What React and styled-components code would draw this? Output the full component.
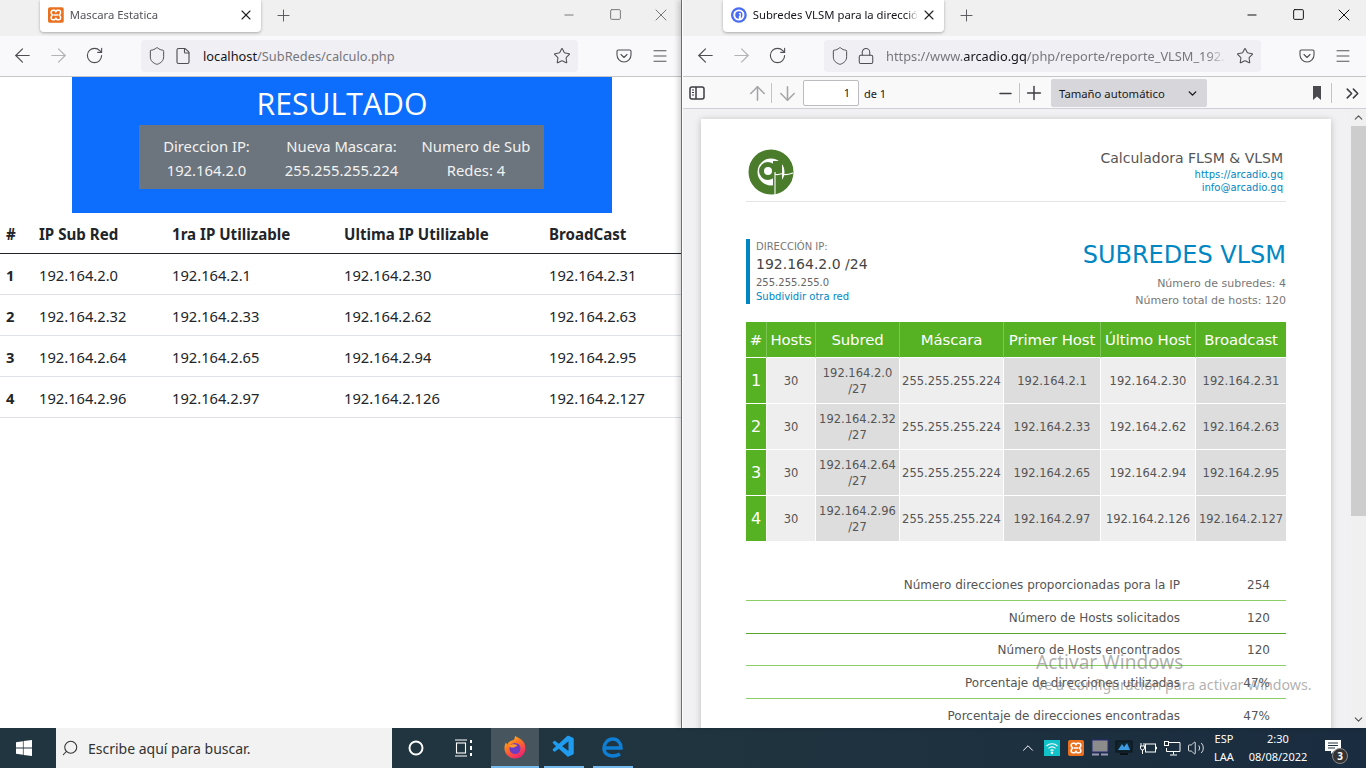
import React from 'react';
import styled, { createGlobalStyle } from 'styled-components';
import {
  ArrowLeft, ArrowRight, RotateCw, Shield, File, Lock, Star, Menu, X, Plus, Minus, Square,
  ArrowUp, ArrowDown, ChevronDown, ChevronsRight, ChevronUp, Search, Volume2,
} from 'lucide-react';
import { VscVscode } from 'react-icons/vsc';

const GlobalStyle = createGlobalStyle`
  html, body { margin: 0; padding: 0; background: #fff; overflow: hidden; }
  * { box-sizing: border-box; }
`;

const UI_FONT = `"Noto Sans", "Open Sans", sans-serif`;
const PDF_FONT = `"DejaVu Sans", Verdana, sans-serif`;

const Desktop = styled.div`
  position: relative;
  width: 1366px;
  height: 768px;
  overflow: hidden;
  display: flex;
  flex-direction: column;
  font-family: ${UI_FONT};
`;

const Windows = styled.div`
  display: flex;
  height: 728px;
`;

const LeftPane = styled.div`
  width: 681px;
  overflow: hidden;
`;

const RightPane = styled.div`
  width: 685px;
  padding-left: 1px;
  border-left: 1px solid #6b6b6b;
  background: #fff;
  box-shadow: -3px 0 5px rgba(0, 0, 0, 0.16);
  position: relative;
  overflow: hidden;
`;

const Browser = styled.div`
  width: 683px;
  height: 728px;
  display: flex;
  flex-direction: column;
  background: #fff;
`;

const TabStrip = styled.div`
  height: 36px;
  flex: none;
  background: #f0f0f0;
  display: flex;
  padding-left: 40px;
`;

const Tab = styled.div`
  width: 221px;
  height: 32px;
  background: #fff;
  border-radius: 0 0 4px 4px;
  box-shadow: 0 1px 3px rgba(0, 0, 0, 0.3);
  display: flex;
  align-items: center;
  padding: 0 8px 3px;
  color: ${p => (p.$active ? '#15141a' : '#55545a')};
  font-size: 11.3px;
  gap: 6px;
`;

const TabTitle = styled.span`
  width: 168px;
  white-space: nowrap;
  overflow: hidden;
  mask-image: linear-gradient(to right, #000 93%, transparent);
`;

const TabClose = styled(X)`
  flex: none;
  margin: 0 -1px 0 -3px;
  color: #222;
`;

const NewTab = styled.div`
  width: 24px;
  height: 30px;
  margin-left: 10px;
  display: flex;
  align-items: center;
  justify-content: center;
  color: #55545a;
`;

const WindowControls = styled.div`
  display: flex;
  margin-left: auto;
  margin-right: -1px;
  color: ${p => (p.$active ? '#111' : '#777')};
`;

const WindowControl = styled.div`
  width: 46px;
  height: 29px;
  display: flex;
  align-items: center;
  justify-content: center;
`;

const Toolbar = styled.div`
  height: 41px;
  flex: none;
  background: #f9f9fb;
  border-bottom: 1px solid #c6c6c8;
  display: flex;
  align-items: center;
  padding: 0 0 1px 4px;
  color: #4f4e54;
`;

const ToolButton = styled.div`
  width: 36px;
  height: 32px;
  flex: none;
  display: flex;
  align-items: center;
  justify-content: center;
  color: ${p => (p.$disabled ? '#b3b2b6' : '#4f4e54')};
`;

const UrlBar = styled.div`
  width: 437px;
  height: 32px;
  flex: none;
  margin: 0 28px 0 29px;
  background: #f0f0f4;
  border-radius: 4px;
  display: flex;
  align-items: center;
  padding: 0 8px;
  gap: 10px;
`;

const UrlIcon = styled.div`
  width: 16px;
  height: 20px;
  flex: none;
  display: flex;
  align-items: center;
  justify-content: center;
  svg { flex: none; }
`;

const UrlText = styled.div`
  flex: 1;
  min-width: 0;
  margin: 1px 0 0 2px;
  font-size: 12.8px;
  color: #77767c;
  white-space: nowrap;
  overflow: hidden;
  mask-image: ${p => (p.$fade ? 'linear-gradient(to right, #000 94%, transparent)' : 'none')};
  strong { font-weight: 400; color: #15141a; }
`;

const ResultPage = styled.div`
  flex: 1;
  background: #fff;
`;

const Hero = styled.section`
  width: 540px;
  height: 136px;
  margin-left: 72px;
  background: #0d6efd;
  color: #fff;
  padding-top: 8px;
`;

const HeroTitle = styled.h1`
  margin: 0 0 3px;
  font-weight: 400;
  font-family: "Open Sans", sans-serif;
  font-size: 30.2px;
  line-height: 37px;
  text-align: center;
`;

const InfoPanel = styled.div`
  width: 405px;
  height: 64px;
  margin: 0 0 0 67px;
  padding: 9px 0 7px 0;
  background: #6c757d;
  color: #f2f2f2;
  display: grid;
  grid-template-columns: 135px 135px 134px;
  font-size: 14.8px;
  line-height: 24px;
  text-align: center;
  font-weight: 400;
  white-space: nowrap;
`;

const ResultTable = styled.table`
  width: 681px;
  margin-top: 1px;
  table-layout: fixed;
  border-collapse: collapse;
  color: #212529;
  font-size: 14.7px;
  th, td { padding: 2px 0 0 6px; text-align: left; white-space: nowrap; }
  th { height: 39px; font-weight: 700; font-size: 15.1px; border-bottom: 1px solid #212529; }
  td { height: 41px; border-bottom: 1px solid #dee2e6; }
  td:first-child { font-weight: 700; }
`;

const PdfToolbar = styled.div`
  height: 32px;
  flex: none;
  background: #f9f9fa;
  border-bottom: 1px solid #cfcfd8;
  display: flex;
  align-items: center;
  padding-top: 1px;
  color: #4a4a4f;
`;

const PdfButton = styled.div`
  width: 28px;
  height: 28px;
  flex: none;
  margin-left: ${p => p.$gap || 0}px;
  display: flex;
  align-items: center;
  justify-content: center;
  color: ${p => (p.$disabled ? '#a5a5a8' : '#3d3d42')};
`;

const PdfDivider = styled.div`
  width: 1px;
  height: 20px;
  flex: none;
  background: #c4c4c8;
`;

const PageInput = styled.div`
  width: 56px;
  height: 26px;
  margin: 0 5px 0 2px;
  flex: none;
  border: 1px solid #bbbbc0;
  border-radius: 2px;
  background: #fff;
  font-size: 11px;
  color: #18181a;
  line-height: 24px;
  text-align: right;
  padding-right: 8px;
`;

const PageCount = styled.div`
  width: 22px;
  font-size: 11px;
  white-space: nowrap;
  color: #18181a;
`;

const ZoomSelect = styled.div`
  width: 156px;
  height: 28px;
  margin: 0 96px 0 3px;
  flex: none;
  background: #d7d7db;
  border-radius: 2px;
  display: flex;
  align-items: center;
  justify-content: space-between;
  padding: 0 8px;
  font-size: 11.3px;
  color: #18181a;
`;

const PdfBody = styled.div`
  flex: 1;
  min-height: 0;
  display: flex;
  background: #f1f1f3;
`;

const Viewer = styled.div`
  flex: 1;
  min-width: 0;
  padding: 10px 0 0 18px;
  overflow: hidden;
`;

const Scrollbar = styled.div`
  width: 15px;
  flex: none;
  background: #f0f0f0;
  display: flex;
  flex-direction: column;
  align-items: center;
  color: #505050;
`;

const ScrollArrow = styled.div`
  height: 17px;
  flex: none;
  display: flex;
  align-items: center;
  justify-content: center;
`;

const ScrollThumb = styled.div`
  width: 15px;
  height: 390px;
  background: #cdcdcd;
`;

const ScrollRest = styled.div`
  flex: 1;
`;

const Sheet = styled.div`
  width: 630px;
  min-height: 700px;
  padding: 30px 45px 0;
  background: #fff;
  box-shadow: 0 1px 7px rgba(0, 0, 0, 0.22);
  font-family: ${PDF_FONT};
  color: #555;
`;

const SheetHeader = styled.header`
  height: 53px;
  border-bottom: 1px solid #e4e4e4;
  display: flex;
  justify-content: space-between;
`;

const Brand = styled.div`
  padding: 0 2px;
`;

const Contact = styled.div`
  text-align: right;
  padding: 0 3px 0 0;
  font-size: 10px;
  line-height: 13px;
  color: #0087c3;
`;

const ContactTitle = styled.div`
  font-size: 14px;
  line-height: 18px;
  color: #555;
  margin-bottom: 1px;
`;

const Summary = styled.section`
  margin-top: 37px;
  height: 65px;
  display: flex;
  justify-content: space-between;
`;

const IpBlock = styled.div`
  border-left: 4px solid #0087c3;
  padding: 1px 0 0 6px;
  font-size: 10px;
  line-height: 14px;
  color: #666;
`;

const IpLabel = styled.div`
  color: #777;
`;

const IpValue = styled.div`
  font-size: 14px;
  line-height: 20px;
  color: #444;
  margin-bottom: 2px;
`;

const IpLink = styled.div`
  color: #0087c3;
`;

const ReportInfo = styled.div`
  text-align: right;
  padding-top: 1px;
  font-size: 11px;
  line-height: 17px;
  color: #777;
`;

const ReportTitle = styled.h2`
  margin: 0 0 5px;
  font-size: 24px;
  line-height: 30px;
  font-weight: 400;
  color: #0087c3;
`;

const SubnetTable = styled.table`
  width: 540px;
  margin-top: 18px;
  table-layout: fixed;
  border-collapse: separate;
  border-spacing: 0;
  font-size: 11.5px;
  line-height: 16px;
  text-align: center;
`;

const HeadCell = styled.th`
  height: 36px;
  padding: 0;
  font-size: 14.9px;
  font-weight: 400;
  letter-spacing: -0.1px;
  color: #fff;
  white-space: nowrap;
  background: #57b223;
  border-right: 1px solid #7cc655;
  border-bottom: 1px solid #fff;
  &:last-child { border-right: 0; }
`;

const RowCell = styled.td`
  height: 46px;
  padding: 0;
  font-size: 16px;
  color: #fff;
  background: #57b223;
  border-right: 1px solid #fff;
  border-bottom: 1px solid #fff;
`;

const DataCell = styled.td`
  height: 46px;
  padding: 0;
  color: #555;
  white-space: nowrap;
  background: ${p => (p.$dark ? '#dddddd' : '#eeeeee')};
  border-right: 1px solid #fff;
  border-bottom: 1px solid #fff;
  &:last-child { border-right: 0; }
`;

const Totals = styled.div`
  margin-top: 26px;
`;

const TotalRow = styled.div`
  height: 32.75px;
  padding-top: 2px;
  display: grid;
  grid-template-columns: 434px 90px;
  align-items: center;
  text-align: right;
  font-size: 12px;
  color: #555;
  border-bottom: ${p => (p.$last ? '0' : `1px solid ${p.$strong ? '#5aa52e' : '#8ccf66'}`)};
`;

const Taskbar = styled.footer`
  height: 40px;
  flex: none;
  background: linear-gradient(to right, #20353f 45%, #1a2c3f);
  display: flex;
  align-items: stretch;
  color: #fff;
`;

const StartButton = styled.div`
  width: 48px;
  display: flex;
  align-items: center;
  justify-content: center;
`;

const SearchBox = styled.div`
  width: 336px;
  margin-left: 8px;
  background: #f2f2f2;
  display: flex;
  align-items: center;
  gap: 9px;
  padding-left: 5px;
  color: #333;
  font-size: 14px;
`;

const SearchIcon = styled(Search)`
  transform: scaleX(-1);
`;

const BarIcon = styled.div`
  width: 48px;
  flex: none;
  display: flex;
  align-items: center;
  justify-content: center;
`;

const AppButton = styled.div`
  width: ${p => p.$w}px;
  margin-left: ${p => p.$gap}px;
  flex: none;
  display: flex;
  align-items: center;
  justify-content: center;
  background: ${p => (p.$active ? '#47565e' : 'transparent')};
  border-bottom: 2px solid #76b9ed;
`;

const Tray = styled.div`
  margin-left: auto;
  display: flex;
  align-items: center;
`;

const TrayIcon = styled.div`
  width: 24px;
  height: 40px;
  flex: none;
  display: flex;
  align-items: center;
  justify-content: center;
`;

const LangBox = styled.div`
  width: 32px;
  font-size: 11px;
  line-height: 18px;
  text-align: center;
`;

const Clock = styled.div`
  width: 72px;
  margin-left: 2px;
  margin-right: 4px;
  font-size: 11px;
  line-height: 18px;
  text-align: center;
  white-space: nowrap;
`;

const Notify = styled.div`
  position: relative;
  width: 30px;
  margin-right: 18px;
  height: 40px;
  padding-bottom: 3px;
  display: flex;
  align-items: center;
  justify-content: center;
`;

const NotifyBadge = styled.span`
  position: absolute;
  left: 14px;
  top: 20px;
  width: 16px;
  height: 16px;
  border-radius: 50%;
  background: #333;
  border: 1px solid #8a8a8a;
  font-size: 10px;
  font-weight: 700;
  line-height: 14px;
  text-align: center;
`;

const Watermark = styled.div`
  position: absolute;
  left: 1036px;
  top: 650px;
  color: rgba(110, 110, 110, 0.55);
  white-space: nowrap;
  pointer-events: none;
  font-size: 14.2px;
  line-height: 20px;
  div:first-child { font-size: 19px; line-height: 24px; margin-bottom: 1px; }
`;

const Xampp = () => (
  <svg width="16" height="16" viewBox="0 0 16 16">
    <rect width="16" height="16" rx="2" fill="#e8701f" />
    <path
      d="M5.200 3.200h1.600l1.200 1.500 1.200-1.500h1.600a2 2 0 0 1 2 2v.8L11.500 8l1.300 2v.8a2 2 0 0 1-2 2H9.200L8 11.300l-1.200 1.500H5.200a2 2 0 0 1-2-2V10l1.300-2-1.300-2v-.8a2 2 0 0 1 2-2z"
      fill="none"
      stroke="#fff"
      strokeWidth="1.500"
    />
    <path d="M5.500 8h5" stroke="#fff" strokeWidth="1.500" />
  </svg>
);

const ArcadioFav = () => (
  <svg width="16" height="16" viewBox="0 0 16 16">
    <circle cx="8" cy="8" r="8" fill="#4a6cf0" />
    <circle cx="8" cy="8" r="4.700" fill="none" stroke="#fff" strokeWidth="2" />
    <rect x="8" y="6" width="2" height="7" fill="#fff" />
    <circle cx="7.600" cy="8" r="1.300" fill="#4a6cf0" />
  </svg>
);

const Pocket = () => (
  <svg width="16" height="16" viewBox="0 0 16 16" fill="none" stroke="currentColor" strokeWidth="1.100">
    <path d="M2.300 2h11.400c.7 0 1.300.6 1.300 1.300V7a7 7 0 0 1-14 0V3.300C1 2.600 1.600 2 2.300 2z" />
    <path d="M5 6.500l3 3 3-3" strokeLinecap="round" strokeLinejoin="round" />
  </svg>
);

const SidebarIcon = () => (
  <svg width="16" height="16" viewBox="0 0 16 16" fill="none" stroke="currentColor" strokeWidth="1.500">
    <rect x="1" y="2" width="14" height="12" rx="2" />
    <path d="M7 2v12" />
    <path d="M3 5h2M3 7.500h2M3 10h2" strokeWidth="1" />
  </svg>
);

const PdfBookmark = () => (
  <svg width="10" height="16" viewBox="0 0 10 16">
    <path d="M1 1h8v14l-4-3.500L1 15z" fill="#4a4a4f" />
  </svg>
);

const ArcadioLogo = () => (
  <svg width="46" height="46" viewBox="0 0 46 46">
    <circle cx="23" cy="23" r="18" fill="none" stroke="#4a7c2c" strokeWidth="9" />
    <circle cx="20" cy="22" r="6.500" fill="none" stroke="#4a7c2c" strokeWidth="5" />
    <rect x="25" y="12" width="9" height="26" fill="#4a7c2c" />
    <path d="M27 23v23M27 25c3 2 5-1 7 0s5 1 11-1" fill="none" stroke="#fff" strokeWidth="1.100" />
  </svg>
);

const WindowsLogo = () => (
  <svg width="16" height="16" viewBox="0 0 16 16" fill="#fff">
    <path d="M0 2.200l6.900-1v6.400H0zM7.600 1.100L16 0v7.600H7.600zM0 8.400h6.900v6.400l-6.900-1zM7.600 8.400H16V16l-8.400-1.100z" />
  </svg>
);

const TaskView = () => (
  <svg width="20" height="18" viewBox="0 0 20 18" fill="none" stroke="#fff" strokeWidth="1.100">
    <path d="M1 1h12M1 17h12" />
    <rect x="2.500" y="4" width="9" height="10" />
    <path d="M16 1h2v3h-2zM16 7h2v4h-2zM16 14h2v3h-2z" fill="#fff" stroke="none" />
  </svg>
);

const FirefoxLogo = () => (
  <svg width="24" height="24" viewBox="0 0 24 24">
    <defs>
      <linearGradient id="ffBody" x1="0" y1="0" x2="0.6" y2="1">
        <stop offset="0" stopColor="#ffcb2f" />
        <stop offset="0.45" stopColor="#ff7a1f" />
        <stop offset="1" stopColor="#f0246e" />
      </linearGradient>
    </defs>
    <path d="M12 1c4 2 8 4 9.500 7.500 2 5 .5 10.500-3.500 13.300C14 24.500 7.500 24 4 20 .8 16.500.8 11 3 7.500c.3 1 .8 1.800 1.500 2.300C5 6.500 8.500 5.500 10.500 5 11.500 4 12 2.500 12 1z" fill="url(#ffBody)" />
    <circle cx="12" cy="13.500" r="5.500" fill="#6d3cc4" />
    <path d="M6 11c2-2 6-2.500 8-1 1 .7-1 1.500-2 2-1.500.7-4 1-6-1z" fill="#ff9a2b" />
  </svg>
);

const EdgeLogo = () => (
  <svg width="24" height="24" viewBox="0 0 24 24" fill="none" stroke="#0f7fd6" strokeWidth="3.400">
    <path d="M3 13h17c.2-5-3.500-9-8.200-9C7 4 3.200 8 3 13c-.2 4.800 3.500 8 8.500 8 3 0 5.500-.8 7.500-2" />
  </svg>
);

const WifiTile = () => (
  <svg width="16" height="16" viewBox="0 0 16 16" fill="none" stroke="#fff" strokeWidth="1.100">
    <rect width="16" height="16" fill="#12c2c9" stroke="none" />
    <path d="M2.500 6a8 8 0 0 1 11 0M4.500 8.300a5 5 0 0 1 7 0M6.500 10.500a2.200 2.200 0 0 1 3 0" />
    <circle cx="8" cy="12.800" r="1.200" fill="#fff" stroke="none" />
  </svg>
);

const MonitorTile = () => (
  <svg width="18" height="18" viewBox="0 0 18 18">
    <rect x="1" y="1" width="16" height="12" fill="#8c8c8c" stroke="#2b2d7a" />
    <path d="M1 15.500h7M10 15.500h7" stroke="#9a9ab8" strokeWidth="2" />
  </svg>
);

const DisplayTile = () => (
  <svg width="18" height="16" viewBox="0 0 18 16">
    <rect x="1" y="1" width="16" height="11" fill="#10242f" stroke="#0b1318" />
    <path d="M3 10l4-6 2 3 3-4 3 7z" fill="#3d9ae0" />
    <rect x="5" y="13" width="8" height="2" fill="#0b1318" />
  </svg>
);

const PowerIcon = () => (
  <svg width="17" height="14" viewBox="0 0 17 14" fill="none" stroke="#fff" strokeWidth="1">
    <rect x="5.500" y="3" width="10" height="8" />
    <path d="M15.500 6h1v2h-1" />
    <path d="M1 2v3M4 2v3M0.500 5h4v2a2 2 0 0 1-4 0zM2.500 9v4" />
  </svg>
);

const NetworkIcon = () => (
  <svg width="17" height="15" viewBox="0 0 17 15" fill="none" stroke="#fff" strokeWidth="1">
    <path d="M5 1.500h11v9H2.500V7" />
    <path d="M9.500 10.500v3M6 14h7" />
    <rect x="0.500" y="0.500" width="4" height="4" />
  </svg>
);

const NotifyIcon = () => (
  <svg width="16" height="14" viewBox="0 0 16 14" fill="#fff">
    <path d="M0 0h16v11H9l-3 3v-3H0z" />
    <path d="M3 3h10M3 5.500h10M3 8h7" stroke="#20343f" strokeWidth="1" />
  </svg>
);

const resultRows = [
  ['1', '192.164.2.0', '192.164.2.1', '192.164.2.30', '192.164.2.31'],
  ['2', '192.164.2.32', '192.164.2.33', '192.164.2.62', '192.164.2.63'],
  ['3', '192.164.2.64', '192.164.2.65', '192.164.2.94', '192.164.2.95'],
  ['4', '192.164.2.96', '192.164.2.97', '192.164.2.126', '192.164.2.127'],
];

const totals = [
  ['Número direcciones proporcionadas pora la IP', '254'],
  ['Número de Hosts solicitados', '120', true],
  ['Número de Hosts encontrados', '120'],
  ['Porcentaje de direcciones utilizadas', '47%'],
  ['Porcentaje de direcciones encontradas', '47%'],
];

const TabBar = ({ active, icon, title }) => (
  <TabStrip>
    <Tab $active={active}>
      {icon}
      <TabTitle>{title}</TabTitle>
      <TabClose size={16} strokeWidth={1.7} />
    </Tab>
    <NewTab><Plus size={19} strokeWidth={1.2} /></NewTab>
    <WindowControls $active={active}>
      <WindowControl><Minus size={14} strokeWidth={1.7} /></WindowControl>
      <WindowControl><Square size={13} strokeWidth={1.8} /></WindowControl>
      <WindowControl><X size={20} strokeWidth={1.2} /></WindowControl>
    </WindowControls>
  </TabStrip>
);

const NavBar = ({ siteIcon, fade, children }) => (
  <Toolbar>
    <ToolButton><ArrowLeft size={23} strokeWidth={1.2} /></ToolButton>
    <ToolButton $disabled><ArrowRight size={23} strokeWidth={1.2} /></ToolButton>
    <ToolButton><RotateCw size={19} strokeWidth={1.4} /></ToolButton>
    <UrlBar>
      <UrlIcon><Shield size={20} strokeWidth={1.2} /></UrlIcon>
      <UrlIcon>{siteIcon}</UrlIcon>
      <UrlText $fade={fade}>{children}</UrlText>
      <UrlIcon><Star size={18} strokeWidth={1.4} /></UrlIcon>
    </UrlBar>
    <ToolButton><Pocket /></ToolButton>
    <ToolButton><Menu size={18} strokeWidth={1.3} /></ToolButton>
  </Toolbar>
);

export default function App() {
  return (
    <Desktop>
      <GlobalStyle />
      <Windows>
        <LeftPane>
          <Browser>
            <TabBar icon={<Xampp />} title="Mascara Estatica" />
            <NavBar siteIcon={<File size={18} strokeWidth={1.5} />}>
              <strong>localhost</strong>/SubRedes/calculo.php
            </NavBar>
            <ResultPage>
              <Hero>
                <HeroTitle>RESULTADO</HeroTitle>
                <InfoPanel>
                  <div>Direccion IP:<br />192.164.2.0</div>
                  <div>Nueva Mascara:<br />255.255.255.224</div>
                  <div>Numero de Sub<br />Redes: 4</div>
                </InfoPanel>
              </Hero>
              <ResultTable>
                <colgroup>
                  <col width="33" /><col width="133" /><col width="172" /><col width="205" /><col width="138" />
                </colgroup>
                <thead>
                  <tr>
                    <th>#</th>
                    <th>IP Sub Red</th>
                    <th>1ra IP Utilizable</th>
                    <th>Ultima IP Utilizable</th>
                    <th>BroadCast</th>
                  </tr>
                </thead>
                <tbody>
                  {resultRows.map(row => (
                    <tr key={row[0]}>
                      {row.map((cell, i) => <td key={i}>{cell}</td>)}
                    </tr>
                  ))}
                </tbody>
              </ResultTable>
            </ResultPage>
          </Browser>
        </LeftPane>

        <RightPane>
          <Browser>
            <TabBar active icon={<ArcadioFav />} title="Subredes VLSM para la dirección IP" />
            <NavBar fade siteIcon={<Lock size={18} strokeWidth={1.4} />}>
              https://www.<strong>arcadio.gq</strong>/php/reporte/reporte_VLSM_192.164.2.0
            </NavBar>
            <PdfToolbar>
              <PdfButton><SidebarIcon /></PdfButton>
              <PdfButton $gap={32} $disabled><ArrowUp size={23} strokeWidth={1.6} /></PdfButton>
              <PdfDivider />
              <PdfButton $gap={1} $disabled><ArrowDown size={23} strokeWidth={1.6} /></PdfButton>
              <PageInput>1</PageInput>
              <PageCount>de 1</PageCount>
              <PdfButton $gap={105}><Minus size={19} strokeWidth={1.8} /></PdfButton>
              <PdfDivider />
              <PdfButton><Plus size={22} strokeWidth={1.6} /></PdfButton>
              <ZoomSelect>
                Tamaño automático
                <ChevronDown size={13} strokeWidth={2.6} />
              </ZoomSelect>
              <PdfButton><PdfBookmark /></PdfButton>
              <PdfDivider />
              <PdfButton $gap={6}><ChevronsRight size={21} strokeWidth={1.8} /></PdfButton>
            </PdfToolbar>
            <PdfBody>
              <Viewer>
                <Sheet>
                  <SheetHeader>
                    <Brand><ArcadioLogo /></Brand>
                    <Contact>
                      <ContactTitle>Calculadora FLSM &amp; VLSM</ContactTitle>
                      <div>https://arcadio.gq</div>
                      <div>info@arcadio.gq</div>
                    </Contact>
                  </SheetHeader>
                  <Summary>
                    <IpBlock>
                      <IpLabel>DIRECCIÓN IP:</IpLabel>
                      <IpValue>192.164.2.0 /24</IpValue>
                      <div>255.255.255.0</div>
                      <IpLink>Subdividir otra red</IpLink>
                    </IpBlock>
                    <ReportInfo>
                      <ReportTitle>SUBREDES VLSM</ReportTitle>
                      <div>Número de subredes: 4</div>
                      <div>Número total de hosts: 120</div>
                    </ReportInfo>
                  </Summary>
                  <SubnetTable>
                    <colgroup>
                      <col width="21" /><col width="49" /><col width="84" /><col width="104" />
                      <col width="97" /><col width="95" /><col width="90" />
                    </colgroup>
                    <thead>
                      <tr>
                        {['#', 'Hosts', 'Subred', 'Máscara', 'Primer Host', 'Último Host', 'Broadcast'].map(h => (
                          <HeadCell key={h}>{h}</HeadCell>
                        ))}
                      </tr>
                    </thead>
                    <tbody>
                      {resultRows.map(r => (
                        <tr key={r[0]}>
                          <RowCell>{r[0]}</RowCell>
                          <DataCell>30</DataCell>
                          <DataCell $dark>{r[1]}<br />/27</DataCell>
                          <DataCell>255.255.255.224</DataCell>
                          <DataCell $dark>{r[2]}</DataCell>
                          <DataCell>{r[3]}</DataCell>
                          <DataCell $dark>{r[4]}</DataCell>
                        </tr>
                      ))}
                    </tbody>
                  </SubnetTable>
                  <Totals>
                    {totals.map(([label, value, strong], i) => (
                      <TotalRow key={label} $strong={strong} $last={i === totals.length - 1}>
                        <span>{label}</span>
                        <span>{value}</span>
                      </TotalRow>
                    ))}
                  </Totals>
                </Sheet>
              </Viewer>
              <Scrollbar>
                <ScrollArrow><ChevronUp size={13} strokeWidth={2} /></ScrollArrow>
                <ScrollThumb />
                <ScrollRest />
                <ScrollArrow><ChevronDown size={13} strokeWidth={2} /></ScrollArrow>
              </Scrollbar>
            </PdfBody>
          </Browser>
        </RightPane>
      </Windows>

      <Taskbar>
        <StartButton><WindowsLogo /></StartButton>
        <SearchBox>
          <SearchIcon size={18} strokeWidth={1.4} />
          Escribe aquí para buscar.
        </SearchBox>
        <BarIcon><svg width="16" height="16" viewBox="0 0 16 16"><circle cx="8" cy="8" r="6.500" fill="none" stroke="#fff" strokeWidth="2" /></svg></BarIcon>
        <BarIcon><TaskView /></BarIcon>
        <AppButton $active $w={48} $gap={3}><FirefoxLogo /></AppButton>
        <AppButton $w={40} $gap={5}><VscVscode size={26} color="#1f9cf0" /></AppButton>
        <AppButton $w={40} $gap={9}><EdgeLogo /></AppButton>
        <Tray>
          <TrayIcon><ChevronUp size={18} strokeWidth={1.3} /></TrayIcon>
          <TrayIcon><WifiTile /></TrayIcon>
          <TrayIcon><Xampp /></TrayIcon>
          <TrayIcon><MonitorTile /></TrayIcon>
          <TrayIcon><DisplayTile /></TrayIcon>
          <TrayIcon><PowerIcon /></TrayIcon>
          <TrayIcon><NetworkIcon /></TrayIcon>
          <TrayIcon><Volume2 size={18} strokeWidth={1.1} /></TrayIcon>
          <LangBox>ESP<br />LAA</LangBox>
          <Clock>2:30<br />08/08/2022</Clock>
          <Notify>
            <NotifyIcon />
            <NotifyBadge>3</NotifyBadge>
          </Notify>
        </Tray>
      </Taskbar>

      <Watermark>
        <div>Activar Windows</div>
        <div>Ve a Configuración para activar Windows.</div>
      </Watermark>
    </Desktop>
  );
}
